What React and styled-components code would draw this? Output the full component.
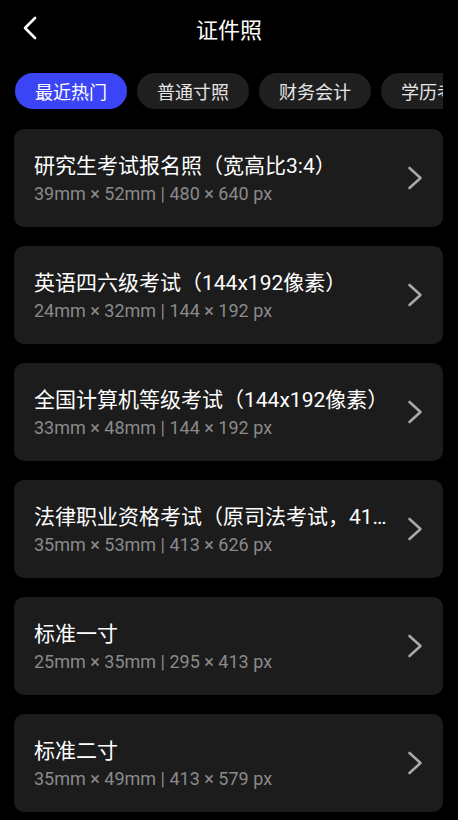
import styled, { createGlobalStyle } from 'styled-components'

const GlobalStyle = createGlobalStyle`
  html, body {
    margin: 0;
    padding: 0;
    background: #000000;
  }
  body {
    font-family: Roboto, "Noto Sans CJK SC", sans-serif;
    color: #ffffff;
  }
`

const Page = styled.div`
  width: 458px;
  min-height: 820px;
  background: #000000;
  overflow: hidden;
`

const Header = styled.header`
  position: relative;
  height: 56px;
  display: flex;
  align-items: center;
  justify-content: center;
`

const BackButton = styled.button`
  position: absolute;
  left: 16px;
  top: 14px;
  width: 28px;
  height: 28px;
  padding: 0;
  border: none;
  background: transparent;
  display: flex;
  align-items: center;
  justify-content: center;
`

const Title = styled.h1`
  margin: 0;
  font-size: 22px;
  font-weight: 400;
  color: #ffffff;
  font-family: "Noto Sans CJK SC", sans-serif;
`

const TabBar = styled.div`
  display: flex;
  gap: 10px;
  margin: 17px 15px 0 15px;
  overflow: hidden;
`

const Tab = styled.div`
  flex: 0 0 auto;
  height: 36px;
  padding: 0 20px;
  border-radius: 18px;
  display: flex;
  align-items: center;
  font-size: 18px;
  font-family: "Noto Sans CJK SC", sans-serif;
  color: ${({ $active }) => ($active ? '#ffffff' : '#e6e6e6')};
  background: ${({ $active }) => ($active ? '#3c45f5' : '#1f1f1f')};
`

const List = styled.div`
  display: flex;
  flex-direction: column;
  gap: 19px;
  margin: 20px 15px 0 14px;
`

const Card = styled.div`
  height: 98px;
  border-radius: 10px;
  background: #1c1c1c;
  display: flex;
  align-items: center;
  padding: 0 20px;
  box-sizing: border-box;
`

const CardText = styled.div`
  flex: 1;
  min-width: 0;
  display: flex;
  flex-direction: column;
  gap: 3px;
`

const CardTitle = styled.div`
  font-size: 21px;
  line-height: 28px;
  color: #ffffff;
  font-family: Roboto, "Noto Sans CJK SC", sans-serif;
  white-space: nowrap;
  overflow: hidden;
  text-overflow: ellipsis;
`

const CardSub = styled.div`
  font-size: 18px;
  line-height: 22px;
  color: #8a8a8a;
  font-family: Roboto, "Noto Sans CJK SC", sans-serif;
`

const Arrow = styled.div`
  flex: 0 0 auto;
  width: 24px;
  margin-left: 6px;
  display: flex;
  justify-content: flex-end;
`

const tabs = ['最近热门', '普通寸照', '财务会计', '学历考试']

const items = [
  { title: '研究生考试报名照（宽高比3:4）', size: '39mm × 52mm | 480 × 640 px' },
  { title: '英语四六级考试（144x192像素）', size: '24mm × 32mm | 144 × 192 px' },
  { title: '全国计算机等级考试（144x192像素）', size: '33mm × 48mm | 144 × 192 px' },
  { title: '法律职业资格考试（原司法考试，413x626像素）', size: '35mm × 53mm | 413 × 626 px' },
  { title: '标准一寸', size: '25mm × 35mm | 295 × 413 px' },
  { title: '标准二寸', size: '35mm × 49mm | 413 × 579 px' },
]

function App() {
  return (
    <Page>
      <GlobalStyle />
      <Header>
        <BackButton aria-label="返回">
          <svg width="16" height="24" viewBox="0 0 16 24">
            <path d="M13 2 L3 12 L13 22" fill="none" stroke="#ffffff" strokeWidth="2.6" strokeLinecap="round" strokeLinejoin="round" />
          </svg>
        </BackButton>
        <Title>证件照</Title>
      </Header>
      <TabBar>
        {tabs.map((tab, index) => (
          <Tab key={tab} $active={index === 0}>
            {tab}
          </Tab>
        ))}
      </TabBar>
      <List>
        {items.map((item) => (
          <Card key={item.title}>
            <CardText>
              <CardTitle>{item.title}</CardTitle>
              <CardSub>{item.size}</CardSub>
            </CardText>
            <Arrow>
              <svg width="16" height="24" viewBox="0 0 16 24">
                <path d="M2.5 2 L13.5 12 L2.5 22" fill="none" stroke="#a8a8a8" strokeWidth="2.6" strokeLinecap="round" strokeLinejoin="round" />
              </svg>
            </Arrow>
          </Card>
        ))}
      </List>
    </Page>
  )
}

export default App
